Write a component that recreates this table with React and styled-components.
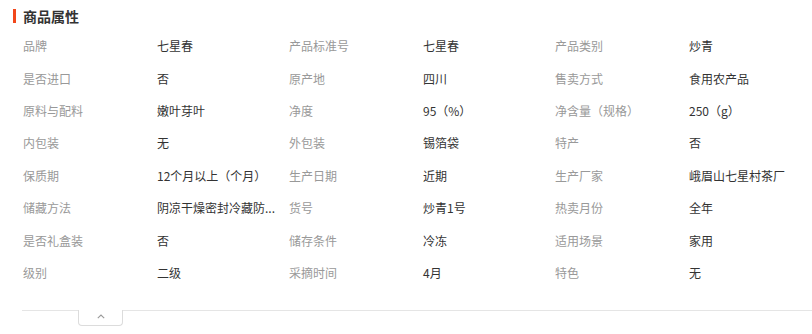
import React from 'react';
import styled, { createGlobalStyle } from 'styled-components';

const GlobalStyle = createGlobalStyle`
  html, body {
    margin: 0;
    padding: 0;
    background: #fff;
  }
  body {
    font-family: "Noto Sans CJK SC", "Noto Sans", sans-serif;
  }
`;

const rows = [
  [['品牌', '七星春'], ['产品标准号', '七星春'], ['产品类别', '炒青']],
  [['是否进口', '否'], ['原产地', '四川'], ['售卖方式', '食用农产品']],
  [['原料与配料', '嫩叶芽叶'], ['净度', '95（%）'], ['净含量（规格）', '250（g）']],
  [['内包装', '无'], ['外包装', '锡箔袋'], ['特产', '否']],
  [['保质期', '12个月以上（个月）'], ['生产日期', '近期'], ['生产厂家', '峨眉山七星村茶厂']],
  [['储藏方法', '阴凉干燥密封冷藏防...'], ['货号', '炒青1号'], ['热卖月份', '全年']],
  [['是否礼盒装', '否'], ['储存条件', '冷冻'], ['适用场景', '家用']],
  [['级别', '二级'], ['采摘时间', '4月'], ['特色', '无']],
];

export default function App() {
  return (
    <>
      <GlobalStyle />
      <Section>
        <Title>商品属性</Title>
        <Grid>
          {rows.flat().map(([label, value], i) => (
            <Cell key={i}>
              <Label>{label}</Label>
              <Value>{value}</Value>
            </Cell>
          ))}
        </Grid>
        <Footer>
          <Toggle>
            <svg width="8" height="5" viewBox="0 0 8 5">
              <path d="M0.8 4.2 L4 1 L7.2 4.2" fill="none" stroke="#9a9a9a" strokeWidth="1.1" />
            </svg>
          </Toggle>
        </Footer>
      </Section>
    </>
  );
}

const Section = styled.div`
  width: 812px;
  height: 334px;
  overflow: hidden;
  padding: 9px 0 0 13px;
  box-sizing: border-box;
`;

const Title = styled.h3`
  margin: 0;
  height: 14px;
  line-height: 14px;
  border-left: 3px solid #f2471b;
  padding-left: 7px;
  font-size: 14px;
  font-weight: bold;
  color: #333;
`;

const Grid = styled.div`
  display: grid;
  grid-template-columns: repeat(3, 266px);
  grid-auto-rows: 32.4px;
  margin-top: 7px;
  padding-left: 10px;
`;

const Cell = styled.div`
  display: flex;
  align-items: center;
  font-size: 12px;
  line-height: 16px;
  white-space: nowrap;
`;

const Label = styled.span`
  width: 134px;
  flex: none;
  color: #999;
`;

const Value = styled.span`
  color: #333;
`;

const Footer = styled.div`
  margin-top: 21px;
  margin-left: 9px;
  border-top: 1px solid #e5e5e5;
  padding-left: 56px;
`;

const Toggle = styled.div`
  width: 45px;
  height: 16px;
  margin-top: -1px;
  background: #fff;
  border: 1px solid #dcdcdc;
  border-top: none;
  border-radius: 0 0 4px 4px;
  display: flex;
  justify-content: center;
  padding-top: 4px;
  box-sizing: border-box;
`;
